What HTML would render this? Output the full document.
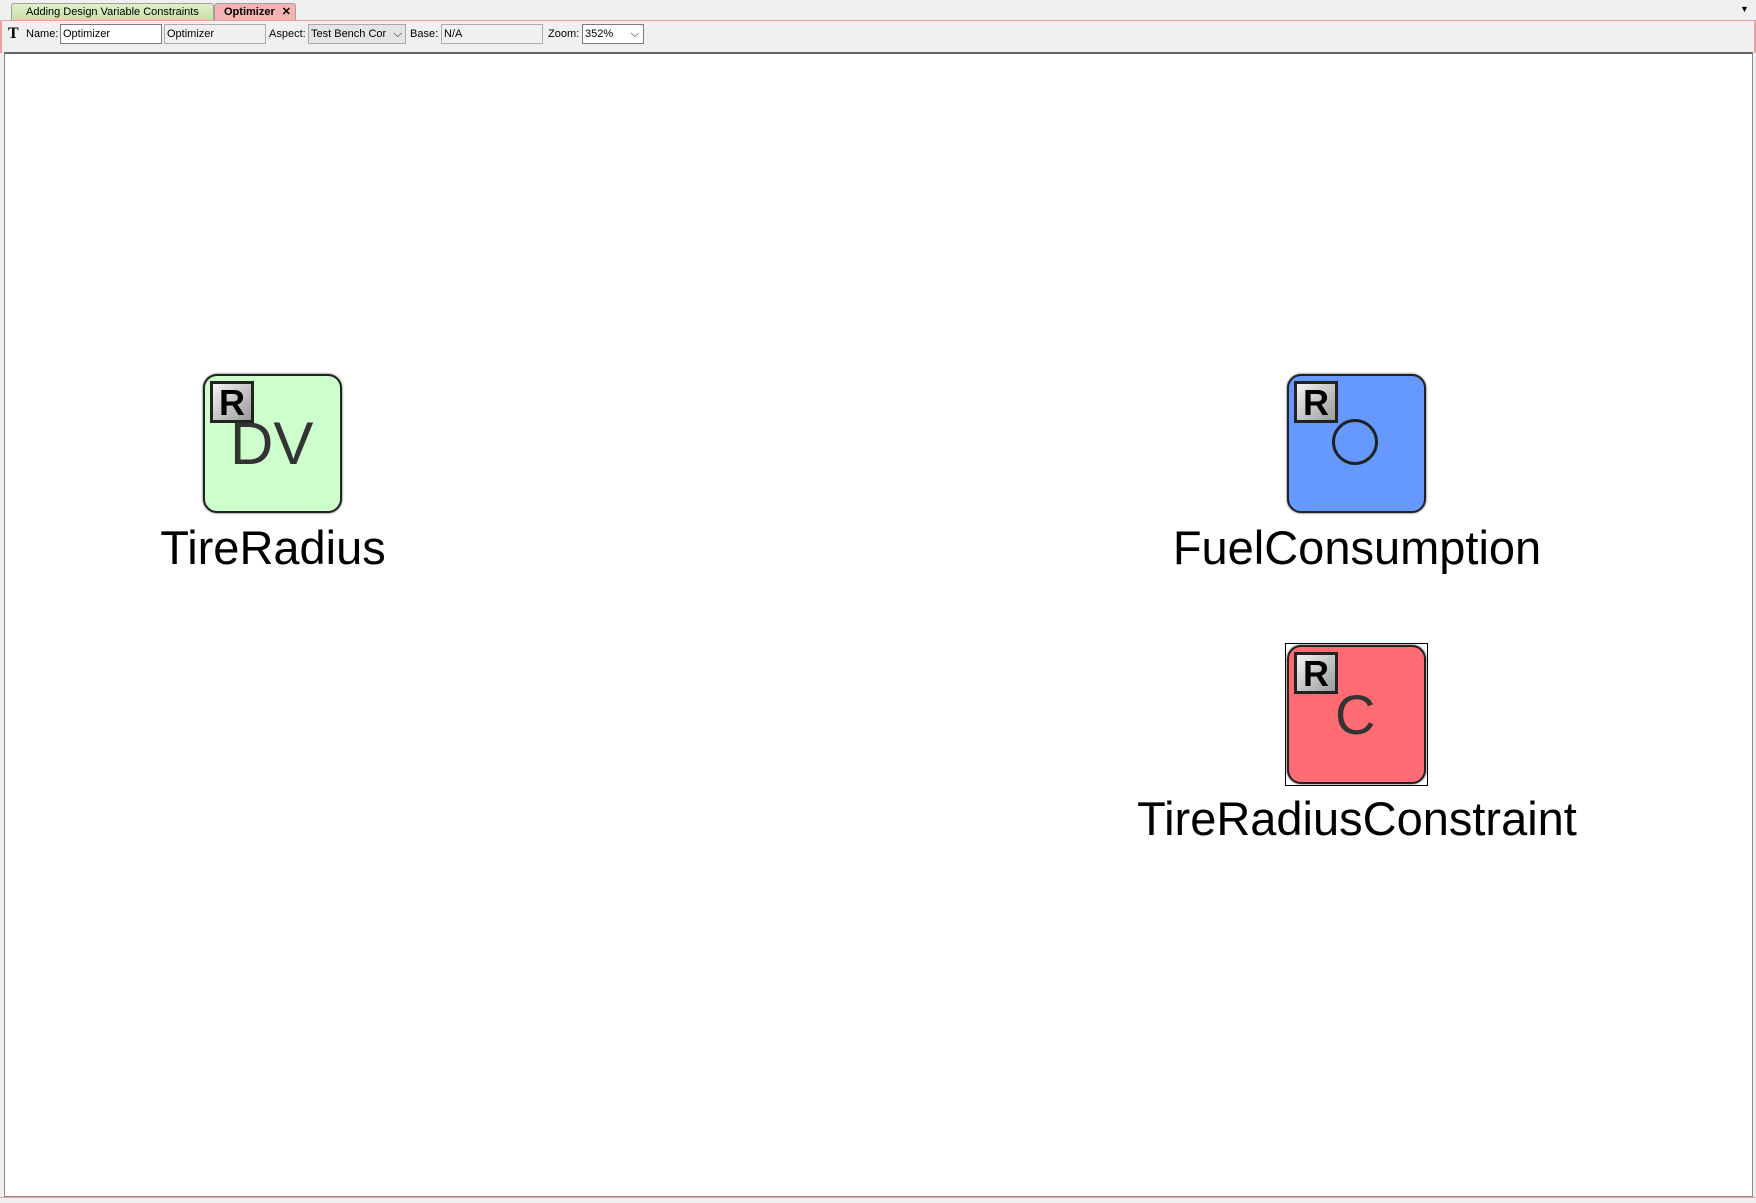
<!DOCTYPE html>
<html><head><meta charset="utf-8"><style>
*{margin:0;padding:0;box-sizing:border-box}
body{width:1756px;height:1203px;background:#f0f0f0;position:relative;overflow:hidden;font-family:"Liberation Sans",sans-serif}
.abs{position:absolute}
.tab{position:absolute;top:3px;height:17px;font-size:11px;line-height:17px;padding-left:14px;border:1px solid #a0a0a0;border-bottom:none;border-radius:3px 3px 0 0}
.fld{position:absolute;top:24px;height:20px;border:1px solid #7a7a7a;background:#fff;font-size:11px;line-height:18px;padding-left:2px}
.lbl{position:absolute;top:28px;font-size:11px}
.node{position:absolute;width:139px;height:139px;border:2px solid #222;border-radius:14px;box-shadow:0 0 2px #444}
.r{position:absolute;left:5px;top:5px;width:44px;height:42px;border:3px solid #222;background:linear-gradient(135deg,#f4f4f4,#9a9a9a);font:bold 36px/38px "Liberation Sans",sans-serif;text-align:center;color:#000}
.sym{position:absolute;font-size:60px;color:#333;font-weight:300}
.name{position:absolute;font-size:47px;color:#000;text-align:center;width:600px}
</style></head><body>
<div class="abs" style="left:0;top:20px;width:1756px;height:1px;background:#f0a0a0"></div>
<div class="tab" style="left:11px;width:203px;background:linear-gradient(#e0f0c8,#c8e0a8);color:#000;">Adding Design Variable Constraints</div>
<div class="tab" style="left:214px;width:82px;background:#f7b3b3;font-weight:bold;padding-left:9px">Optimizer <span style="margin-left:4px">✕</span></div>
<div class="abs" style="left:1740px;top:4px;font-size:9px">▼</div>
<div class="abs" style="left:0;top:21px;width:1756px;height:32px;background:#f0f0f0;border-left:2px solid #f0a0a0;border-right:2px solid #f0a0a0"></div>
<div class="lbl" style="left:8px;top:25px;font:bold 16px 'Liberation Serif',serif">T</div>
<div class="lbl" style="left:26px">Name:</div>
<div class="fld" style="left:60px;width:102px">Optimizer</div>
<div class="fld" style="left:164px;width:102px;background:#f0f0f0;border-color:#aaa">Optimizer</div>
<div class="lbl" style="left:269px">Aspect:</div>
<div class="fld" style="left:308px;width:98px;background:#e4e4e4;border-color:#aaa">Test Bench Cor <span style="position:absolute;right:3px">⌵</span></div>
<div class="lbl" style="left:410px">Base:</div>
<div class="fld" style="left:441px;width:102px;background:#f0f0f0;border-color:#aaa">N/A</div>
<div class="lbl" style="left:548px">Zoom:</div>
<div class="fld" style="left:582px;width:62px">352% <span style="position:absolute;right:4px">⌵</span></div>
<div class="abs" style="left:4px;top:52px;width:1749px;height:1145px;background:#fff;border:1px solid #888;border-top:2px solid #666"></div>
<div class="abs" style="left:0;top:1197px;width:1756px;height:6px;background:#f0f0f0;border-top:1px solid #f0a0a0"></div>

<div class="node" style="left:203px;top:374px;background:#ccffcc"><div class="r">R</div><div class="sym" style="left:25px;top:33px">DV</div></div>
<div class="name" style="left:-27px;top:520px">TireRadius</div>

<div class="node" style="left:1287px;top:374px;background:#6699ff"><div class="r">R</div>
<div style="position:absolute;left:43px;top:43px;width:46px;height:46px;border:3px solid #222;border-radius:50%"></div></div>
<div class="name" style="left:1057px;top:520px">FuelConsumption</div>

<div class="abs" style="left:1285px;top:643px;width:143px;height:143px;border:1px solid #000"></div>
<div class="node" style="left:1287px;top:645px;background:#ff6b73"><div class="r">R</div><div class="sym" style="left:46px;top:35px;font-size:56px">C</div></div>
<div class="name" style="left:1057px;top:791px">TireRadiusConstraint</div>
</body></html>
